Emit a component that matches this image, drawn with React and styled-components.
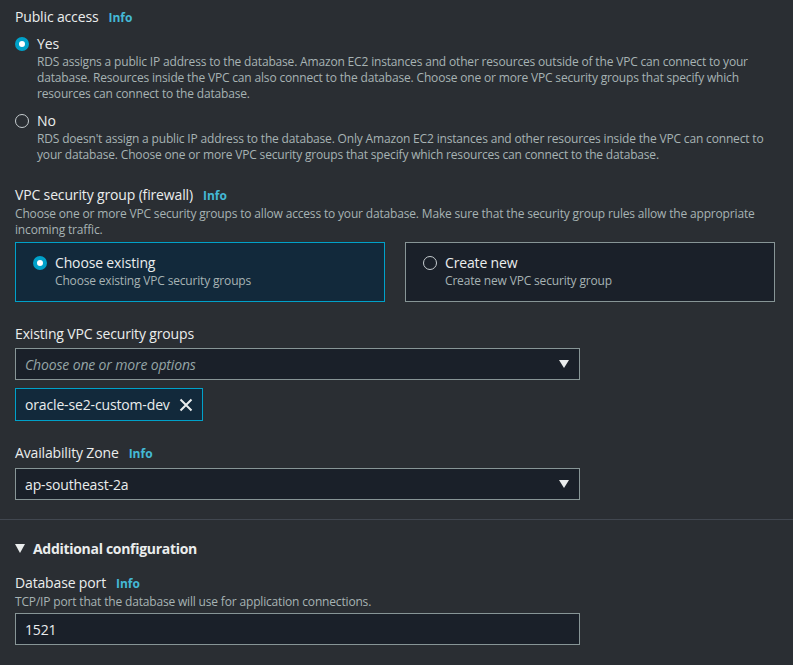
import React from 'react';
import styled, { createGlobalStyle } from 'styled-components';

const Global = createGlobalStyle`
  html, body { margin: 0; padding: 0; background: #2a2e33; }
  body { font-family: "Open Sans", "Noto Sans", sans-serif; color: #d5dbdb; }
`;

const Page = styled.div`
  width: 793px;
  height: 665px;
  overflow: hidden;
  background: #2a2e33;
`;

const Section = styled.div`
  padding: 7px 15px 0;
`;

const Field = styled.div`
  margin-top: ${p => p.$top || 0}px;
`;

const Label = styled.div`
  display: flex;
  align-items: baseline;
  gap: 10px;
  font-size: 14px;
  line-height: 20px;
  letter-spacing: -0.15px;
  color: #eaeded;
`;

const Info = styled.span`
  font-size: 12px;
  font-weight: 700;
  letter-spacing: 0;
  color: #44b9d6;
`;

const Desc = styled.div`
  font-size: 12px;
  line-height: 16px;
  letter-spacing: -0.17px;
  color: #a7b3b4;
`;

const RadioRow = styled.div`
  display: flex;
  gap: 8px;
  margin-top: ${p => p.$top || 0}px;
`;

const Dot = styled.span`
  flex: none;
  width: 14px;
  height: 14px;
  margin-top: 3px;
  border-radius: 50%;
  box-sizing: border-box;
  ${p => p.$on
    ? `background: #fff; border: 4px solid #00a1c9;`
    : `background: transparent; border: 1.5px solid #c6cdd0;`}
`;

const RadioText = styled.div`
  display: flex;
  flex-direction: column;
`;

const RadioLabel = styled.div`
  font-size: 14px;
  line-height: 20px;
  letter-spacing: -0.15px;
  color: #eaeded;
`;

const Tiles = styled.div`
  display: grid;
  grid-template-columns: 370px 370px;
  gap: 20px;
  margin-top: 4px;
`;

const Tile = styled.div`
  box-sizing: border-box;
  height: 60px;
  padding: 10px 17px;
  border: 1px solid ${p => (p.$on ? '#00a1c9' : '#879596')};
  background: ${p => (p.$on ? '#12293b' : '#1a2029')};
`;

const Box = styled.div`
  box-sizing: border-box;
  width: 565px;
  height: 32px;
  margin-top: ${p => p.$top ?? 4}px;
  padding: 0 9px;
  display: flex;
  align-items: center;
  justify-content: space-between;
  background: #1a2029;
  border: 1px solid #879596;
  font-size: 14px;
  letter-spacing: -0.15px;
  color: ${p => (p.$placeholder ? '#95a5a6' : '#eaeded')};
  font-style: ${p => (p.$placeholder ? 'italic' : 'normal')};
`;

const Caret = () => (
  <svg width="12" height="10" viewBox="0 0 12 10">
    <path d="M1 1h10L6 9z" fill="#eaeded" />
  </svg>
);

const Token = styled.div`
  display: inline-flex;
  align-items: center;
  gap: 9px;
  box-sizing: border-box;
  height: 33px;
  margin-top: 8px;
  padding: 0 9px;
  background: #12293b;
  border: 1px solid #00a1c9;
  font-size: 14px;
  letter-spacing: -0.15px;
  color: #eaeded;
`;

const Divider = styled.div`
  height: 1px;
  background: #414750;
  margin-top: 19px;
`;

const Expander = styled.div`
  display: flex;
  align-items: center;
  gap: 8px;
  font-size: 14px;
  font-weight: 700;
  letter-spacing: -0.3px;
  color: #eaeded;
`;

export default function App() {
  return (
    <Page>
      <Global />
      <Section>
        <Label>Public access <Info>Info</Info></Label>
        <RadioRow $top={6}>
          <Dot $on />
          <RadioText>
            <RadioLabel>Yes</RadioLabel>
            <Desc>
              RDS assigns a public IP address to the database. Amazon EC2 instances and other resources outside of the VPC can connect to your
              database. Resources inside the VPC can also connect to the database. Choose one or more VPC security groups that specify which
              resources can connect to the database.
            </Desc>
          </RadioText>
        </RadioRow>
        <RadioRow $top={9}>
          <Dot />
          <RadioText>
            <RadioLabel>No</RadioLabel>
            <Desc>
              RDS doesn't assign a public IP address to the database. Only Amazon EC2 instances and other resources inside the VPC can connect to
              your database. Choose one or more VPC security groups that specify which resources can connect to the database.
            </Desc>
          </RadioText>
        </RadioRow>

        <Field $top={22}>
          <Label>VPC security group (firewall) <Info>Info</Info></Label>
          <Desc>
            Choose one or more VPC security groups to allow access to your database. Make sure that the security group rules allow the appropriate
            incoming traffic.
          </Desc>
          <Tiles>
            <Tile $on>
              <RadioRow>
                <Dot $on />
                <RadioText>
                  <RadioLabel>Choose existing</RadioLabel>
                  <Desc>Choose existing VPC security groups</Desc>
                </RadioText>
              </RadioRow>
            </Tile>
            <Tile>
              <RadioRow>
                <Dot />
                <RadioText>
                  <RadioLabel>Create new</RadioLabel>
                  <Desc>Create new VPC security group</Desc>
                </RadioText>
              </RadioRow>
            </Tile>
          </Tiles>
        </Field>

        <Field $top={22}>
          <Label>Existing VPC security groups</Label>
          <Box $placeholder>
            Choose one or more options
            <Caret />
          </Box>
          <Token>
            oracle-se2-custom-dev
            <svg width="14" height="14" viewBox="0 0 14 14">
              <path d="M1.5 1.5l11 11M12.5 1.5l-11 11" stroke="#eaeded" strokeWidth="2" />
            </svg>
          </Token>
        </Field>

        <Field $top={22}>
          <Label>Availability Zone <Info>Info</Info></Label>
          <Box>
            ap-southeast-2a
            <Caret />
          </Box>
        </Field>
      </Section>

      <Divider />

      <Section>
        <Field $top={12}>
          <Expander>
            <svg width="10" height="9" viewBox="0 0 10 9">
              <path d="M0 0h10L5 9z" fill="#eaeded" />
            </svg>
            Additional configuration
          </Expander>
        </Field>
        <Field $top={15}>
          <Label>Database port <Info>Info</Info></Label>
          <Desc>TCP/IP port that the database will use for application connections.</Desc>
          <Box $top={3}>1521</Box>
        </Field>
      </Section>
    </Page>
  );
}
